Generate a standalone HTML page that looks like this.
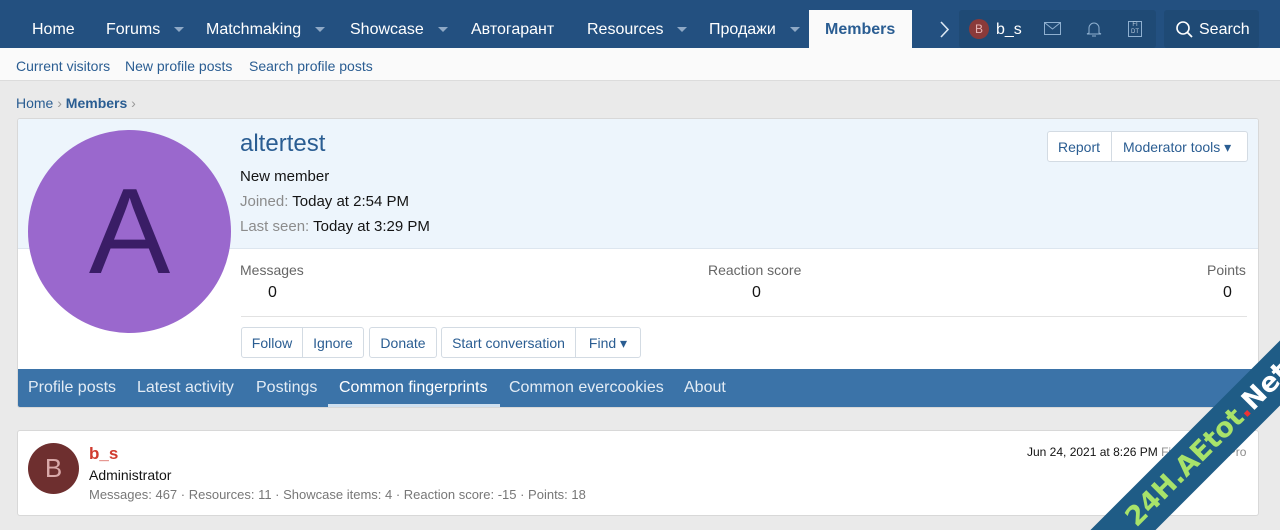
<!DOCTYPE html>
<html><head><style>
*{box-sizing:border-box;margin:0;padding:0}
html,body{width:1280px;height:530px;overflow:hidden}
body{background:#eaeaea;font-family:"Liberation Sans",sans-serif;position:relative;color:#141414}
.hdr{position:absolute;left:0;top:0;width:1280px;height:48px;background:#235080}
.n{position:absolute;top:21px;color:#fff;font-size:16px;white-space:nowrap}
.car{display:inline-block;margin-left:14px;width:0;height:0;border-left:5px solid transparent;border-right:5px solid transparent;border-top:5px solid #8fa9c6;vertical-align:middle}
.act{position:absolute;left:809px;top:10px;width:103px;height:38px;background:#fafafa;color:#2a5d92;font-weight:bold;font-size:16px;padding:11px 0 0 16px}
.grp{position:absolute;top:10px;height:38px;background:#1f4a75;border-radius:3px}
.sub{position:absolute;left:0;top:48px;width:1280px;height:33px;background:#fafafa;border-bottom:1px solid #dcdcdc}
.sub span{position:absolute;top:10px;font-size:14px;color:#2a5d92}
.bc{position:absolute;top:95px;font-size:14px;color:#2a5d92}
.card{position:absolute;left:17px;top:118px;width:1242px;height:290px;background:#fff;border:1px solid #d8d8d8;border-radius:3px;overflow:hidden}
.top{position:absolute;left:0;top:0;width:1242px;height:130px;background:#edf5fc;border-bottom:1px solid #dde6ef}
.av{position:absolute;left:10px;top:11px;width:203px;height:203px;border-radius:50%;background:#9a68cd;color:#3a1d66;font-size:122px;text-align:center;line-height:203px}
.btn{position:absolute;top:208px;height:31px;border:1px solid #d3dbe3;background:#fff;color:#2a5d92;font-size:14px;padding:7px 0;text-align:center;border-radius:3px;white-space:nowrap}
.tabs{position:absolute;left:0;top:250px;width:1242px;height:39px;background:#3b73a8}
.tabs span{position:absolute;top:10px;color:#e3ecf5;font-size:16px;white-space:nowrap}
.c2{position:absolute;left:17px;top:430px;width:1242px;height:86px;background:#fff;border:1px solid #d8d8d8;border-radius:3px}
.g{color:#8c8c8c}
.wm{position:absolute;left:1000px;top:330px;width:280px;height:200px;overflow:hidden}
</style></head><body>
<div class="hdr">
<span class="n" style="left:32px">Home</span>
<span class="n" style="left:106px">Forums<i class="car"></i></span>
<span class="n" style="left:206px">Matchmaking<i class="car"></i></span>
<span class="n" style="left:350px">Showcase<i class="car"></i></span>
<span class="n" style="left:471px">Автогарант</span>
<span class="n" style="left:587px">Resources<i class="car"></i></span>
<span class="n" style="left:709px">Продажи<i class="car"></i></span>
<div class="act">Members</div>
<svg style="position:absolute;left:940px;top:21px" width="10" height="17"><path d="M1 1l7 7.5L1 16" fill="none" stroke="#dbe7f3" stroke-width="1.6"/></svg>
<div class="grp" style="left:959px;width:197px"></div>
<div style="position:absolute;left:969px;top:19px;width:20px;height:20px;border-radius:50%;background:#8a3a3a;color:#e8b4b4;font-size:12px;text-align:center;line-height:20px">B</div>
<span class="n" style="left:996px">b_s</span>
<svg style="position:absolute;left:1044px;top:22px" width="17" height="13"><rect x=".5" y=".5" width="16" height="12" fill="none" stroke="#8fb0d0"/><path d="M1 1l7.5 6L16 1" fill="none" stroke="#8fb0d0"/></svg>
<svg style="position:absolute;left:1086px;top:20px" width="16" height="18"><path d="M3 13V8a5 5 0 0110 0v5l2 1H1z M6 16h4" fill="none" stroke="#8fb0d0"/></svg>
<div style="position:absolute;left:1128px;top:21px;width:14px;height:16px;border:1px solid #8fb0d0;color:#bcd;font-size:6px;line-height:7px;text-align:center">FI<br>DT</div>
<div class="grp" style="left:1164px;width:95px"></div>
<svg style="position:absolute;left:1176px;top:21px" width="17" height="17"><circle cx="7" cy="7" r="6" fill="none" stroke="#fff" stroke-width="1.6"/><path d="M11.5 11.5L16 16" stroke="#fff" stroke-width="1.8"/></svg>
<span class="n" style="left:1199px">Search</span>
</div>
<div class="sub">
<span style="left:16px">Current visitors</span><span style="left:125px">New profile posts</span><span style="left:249px">Search profile posts</span>
</div>
<span class="bc" style="left:16px">Home <span style="color:#999">›</span> <b>Members</b> <span style="color:#999">›</span></span>
<div class="card">
<div class="top"></div>
<div class="av">A</div>
<div style="position:absolute;left:222px;top:11px;font-size:24px;color:#2a5d92">altertest</div>
<div style="position:absolute;left:222px;top:49px;font-size:15px">New member</div>
<div style="position:absolute;left:222px;top:74px;font-size:15px"><span class="g">Joined:</span> Today at 2:54 PM</div>
<div style="position:absolute;left:222px;top:99px;font-size:15px"><span class="g">Last seen:</span> Today at 3:29 PM</div>
<div style="position:absolute;left:1029px;top:12px;height:31px;width:201px;border:1px solid #d3dbe3;background:#fff;border-radius:3px;font-size:14px;color:#2a5d92;white-space:nowrap">
<span style="position:absolute;left:10px;top:7px">Report</span><span style="position:absolute;left:63px;top:0;height:29px;border-left:1px solid #d3dbe3"></span><span style="position:absolute;left:75px;top:7px">Moderator tools ▾</span></div>
<div style="position:absolute;left:222px;top:143px;font-size:14px;color:#666">Messages</div>
<div style="position:absolute;left:250px;top:165px;font-size:16px">0</div>
<div style="position:absolute;left:690px;top:143px;font-size:14px;color:#666">Reaction score</div>
<div style="position:absolute;left:734px;top:165px;font-size:16px">0</div>
<div style="position:absolute;left:1189px;top:143px;font-size:14px;color:#666">Points</div>
<div style="position:absolute;left:1205px;top:165px;font-size:16px">0</div>
<div style="position:absolute;left:223px;top:197px;width:1006px;border-top:1px solid #e2e2e2"></div>
<div class="btn" style="left:223px;width:62px;border-radius:3px 0 0 3px">Follow</div>
<div class="btn" style="left:284px;width:62px;border-radius:0 3px 3px 0">Ignore</div>
<div class="btn" style="left:351px;width:68px">Donate</div>
<div class="btn" style="left:423px;width:135px;border-radius:3px 0 0 3px">Start conversation</div>
<div class="btn" style="left:557px;width:66px;border-radius:0 3px 3px 0">Find ▾</div>
<div class="tabs">
<span style="left:10px">Profile posts</span><span style="left:119px">Latest activity</span><span style="left:238px">Postings</span>
<span style="left:321px;color:#fff">Common fingerprints</span>
<div style="position:absolute;left:310px;top:35px;width:172px;height:4px;background:#cfe0f0"></div>
<span style="left:491px">Common evercookies</span><span style="left:666px">About</span>
</div>
</div>
<div class="c2">
<div style="position:absolute;left:10px;top:12px;width:51px;height:51px;border-radius:50%;background:#6e2f2f;color:#d9a9a9;font-size:26px;text-align:center;line-height:51px">B</div>
<div style="position:absolute;left:71px;top:13px;font-size:17px;font-weight:bold;color:#d03b2f">b_s</div>
<div style="position:absolute;left:71px;top:36px;font-size:14px">Administrator</div>
<div style="position:absolute;left:71px;top:56px;font-size:13px;color:#777">Messages: 467 · Resources: 11 · Showcase items: 4 · Reaction score: -15 · Points: 18</div>
<div style="position:absolute;left:1009px;top:14px;font-size:12px;white-space:nowrap">Jun 24, 2021 at 8:26 PM <span class="g">Fingerprints Pro</span></div>
</div>
<div class="wm"><div style="position:absolute;left:38px;top:92px;width:340px;height:46px;background:#1f5c86;transform:rotate(-45deg);color:#a8e36a;font-weight:bold;font-size:27px;text-align:center;line-height:46px;font-family:'DejaVu Sans',sans-serif;white-space:nowrap">24H.AEtot<span style="color:#e33">.</span><span style="color:#fff">Net</span></div></div>
</body></html>
